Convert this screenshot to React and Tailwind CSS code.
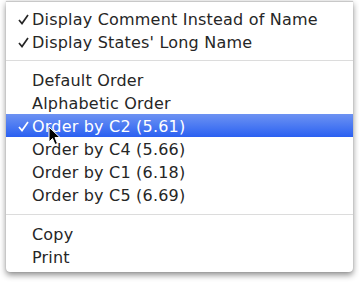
const GROUPS = [
  [
    { label: 'Display Comment Instead of Name', checked: true },
    { label: "Display States' Long Name", checked: true },
  ],
  [
    { label: 'Default Order' },
    { label: 'Alphabetic Order' },
    { label: 'Order by C2 (5.61)', checked: true, active: true },
    { label: 'Order by C4 (5.66)' },
    { label: 'Order by C1 (6.18)' },
    { label: 'Order by C5 (6.69)' },
  ],
  [{ label: 'Copy' }, { label: 'Print' }],
];

const Check = () => (
  <svg width="11" height="11" viewBox="0 0 11 11" className="mt-[2px]">
    <path d="M1 6 L4 9.5 L10 1" fill="none" stroke="currentColor" strokeWidth="1.7" />
  </svg>
);

const Cursor = () => (
  <svg className="absolute left-[48px] top-[126px]" width="14" height="20" viewBox="0 0 14 20">
    <path d="M1 1 L1 16 L4.5 12.5 L7 18.5 L9.5 17.5 L7 11.5 L12 11.5 Z" fill="#000" stroke="#fff" strokeWidth="1" />
  </svg>
);

const Row = ({ label, checked, active }) => (
  <div
    className={`flex items-center h-[23px] ${
      active ? 'bg-gradient-to-b from-[#6d92f2] to-[#2a5ff1] text-white' : 'text-[#262626]'
    }`}
  >
    <span className="w-[26px] pl-[12px] flex items-center">{checked ? <Check /> : null}</span>
    <span className="pt-[2px] tracking-[0.2px]">{label}</span>
  </div>
);

export default function App() {
  return (
    <div className="w-[359px] h-[284px] bg-white relative overflow-hidden" style={{ fontFamily: '"DejaVu Sans", sans-serif' }}>
      <div className="absolute left-[6px] top-[1px] w-[347px] h-[271px] bg-white border-t border-[#c8c8c8] rounded-b-[4px] shadow-[0_3px_6px_rgba(0,0,0,0.45),0_0_1px_rgba(0,0,0,0.3)] pt-[5px] text-[16px]">
        {GROUPS.map((group, gi) => (
          <div key={gi}>
            {gi > 0 && (
              <div className={`${gi === 1 ? 'h-[15px]' : 'h-[16px]'} flex items-center`}>
                <div className="w-full h-px bg-[#dcdcdc]" />
              </div>
            )}
            {group.map((item) => (
              <Row key={item.label} {...item} />
            ))}
          </div>
        ))}
      </div>
      <Cursor />
    </div>
  );
}
